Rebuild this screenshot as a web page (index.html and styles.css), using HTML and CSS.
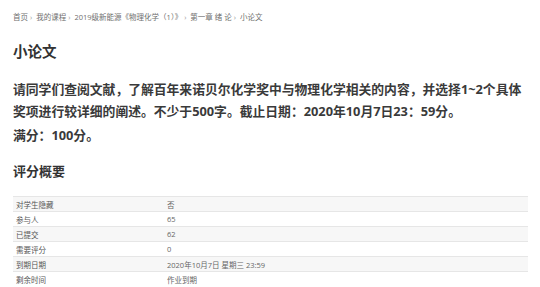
FILE: index.html
```html
<!DOCTYPE html>
<html lang="zh">
<head>
    <meta charset="UTF-8">
    <title>小论文</title>
    <link rel="stylesheet" href="styles.css">
</head>
<body>
    <div class="page">
        <div class="breadcrumb">
            <span>首页</span><span class="sep">›</span>
            <span>我的课程</span><span class="sep">›</span>
            <span>2019级新能源《物理化学（1）》</span><span class="sep">›</span>
            <span>第一章 绪 论</span><span class="sep">›</span>
            <span>小论文</span>
        </div>

        <h2 class="title">小论文</h2>

        <div class="intro">
            <p>请同学们查阅文献，了解百年来诺贝尔化学奖中与物理化学相关的内容，并选择1~2个具体奖项进行较详细的阐述。不少于500字。截止日期：2020年10月7日23：59分。</p>
            <p>满分：100分。</p>
        </div>

        <h3 class="summary-title">评分概要</h3>

        <table class="summary">
            <tr><td class="label">对学生隐藏</td><td>否</td></tr>
            <tr><td class="label">参与人</td><td>65</td></tr>
            <tr><td class="label">已提交</td><td>62</td></tr>
            <tr><td class="label">需要评分</td><td>0</td></tr>
            <tr><td class="label">到期日期</td><td>2020年10月7日 星期三 23:59</td></tr>
            <tr><td class="label">剩余时间</td><td>作业到期</td></tr>
        </table>
    </div>
</body>
</html>
```

FILE: styles.css
```css
body {
    margin: 0;
    background: #fff;
    font-family: "Open Sans", "Noto Sans CJK SC", sans-serif;
    color: #333;
}

.page {
    padding: 11px 12px 0 13px;
}

.breadcrumb {
    font-size: 7.5px;
    line-height: 12px;
    color: #6f6f6f;
}

.breadcrumb .sep {
    margin: 0 2px;
    color: #999;
}

.title {
    margin: 19px 0 0;
    font-size: 14.5px;
    line-height: 20px;
    font-weight: bold;
    color: #333;
}

.intro {
    margin-top: 16px;
}

.intro p {
    margin: 0 0 2px;
    font-size: 12.8px;
    line-height: 22px;
    font-weight: bold;
    color: #3a3a3a;
}

.summary-title {
    margin: 16px 0 0;
    font-size: 13px;
    line-height: 18px;
    font-weight: bold;
    color: #333;
}

.summary {
    margin-top: 16px;
    width: 515px;
    border-collapse: collapse;
    font-size: 7.5px;
    color: #666;
}

.summary td {
    height: 14px;
    padding: 0 0 0 3px;
    border-top: 1px solid #e6e6e6;
}

.summary tr:nth-child(odd) td {
    background: #f7f7f7;
}

.summary .label {
    width: 148px;
    color: #555;
}
```
